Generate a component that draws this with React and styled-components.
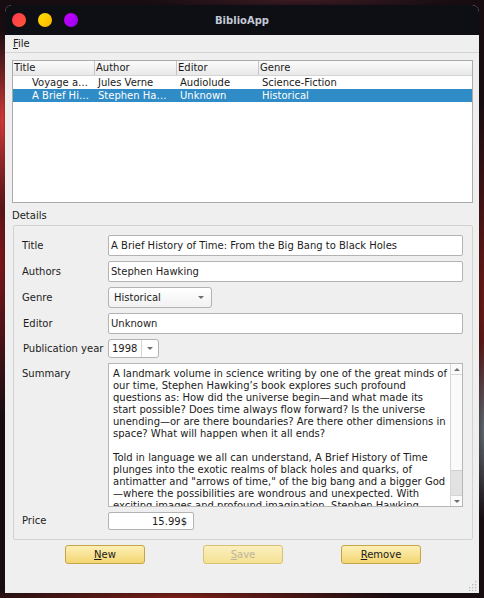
import React from 'react';
import styled, { createGlobalStyle } from 'styled-components';

const Global = createGlobalStyle`
  html, body { margin: 0; padding: 0; }
  body {
    width: 484px;
    height: 598px;
    overflow: hidden;
    background:
      radial-gradient(ellipse 14px 90px at 2px 120px, rgba(230, 60, 60, 0.9), transparent),
      radial-gradient(ellipse 20px 160px at 0px 260px, rgba(150, 25, 30, 0.8), transparent),
      radial-gradient(ellipse 14px 90px at 484px 430px, rgba(110, 140, 150, 0.7), transparent),
      radial-gradient(ellipse 16px 200px at 484px 300px, rgba(140, 30, 25, 0.7), transparent),
      radial-gradient(ellipse 220px 14px at 180px 598px, rgba(150, 35, 25, 0.8), transparent),
      radial-gradient(ellipse 160px 10px at 300px 0px, rgba(70, 30, 40, 0.8), transparent),
      #170d11;
    font-family: "DejaVu Sans", "Liberation Sans", sans-serif;
    font-size: 10px;
    color: #1c1c1c;
  }
`;

const Desktop = styled.div`
  box-sizing: border-box;
  width: 484px;
  height: 598px;
  padding: 5px;
`;

const Window = styled.div`
  position: relative;
  width: 474px;
  height: 588px;
  background: #efefef;
  border-radius: 7px 7px 0 0;
  overflow: hidden;
  display: flex;
  flex-direction: column;
`;

const TitleBar = styled.div`
  flex: none;
  height: 30px;
  background: #0e0f14;
  display: grid;
  grid-template-columns: 1fr auto 1fr;
  align-items: center;
`;

const Lights = styled.div`
  display: flex;
  gap: 12px;
  padding-left: 7px;
`;

const Light = styled.span`
  width: 14px;
  height: 14px;
  border-radius: 50%;
  background: ${p => p.$bg};
`;

const WinTitle = styled.div`
  font-weight: bold;
  font-size: 10px;
  color: #c3cad7;
`;

const MenuBar = styled.div`
  flex: none;
  height: 17px;
  line-height: 17px;
  padding-left: 8px;
  border-bottom: 1px solid #d3d3d3;
`;

const Content = styled.div`
  flex: 1;
  display: flex;
  flex-direction: column;
  padding: 7px 6px 0 7px;
`;

const Table = styled.div`
  box-sizing: border-box;
  height: 143px;
  background: #fff;
  border: 1px solid #ababab;
`;

const cols = '82px 82px 82px 1fr';

const HeaderRow = styled.div`
  display: grid;
  grid-template-columns: ${cols};
  height: 15px;
  background: linear-gradient(#fbfbfb, #e9e9e9);
  border-bottom: 1px solid #d4d4d4;
  box-sizing: border-box;
`;

const HeaderCell = styled.div`
  line-height: 14px;
  padding-left: 1px;
  border-right: ${p => (p.$last ? 'none' : '1px solid #c6c6c6')};
  color: #1a1a1a;
`;

const Row = styled.div`
  display: grid;
  grid-template-columns: ${cols};
  height: 13px;
  line-height: 13px;
  background: ${p => (p.$selected ? '#308cc6' : 'transparent')};
  color: ${p => (p.$selected ? '#ffffff' : '#1a1a1a')};
`;

const Cell = styled.div`
  padding-left: ${p => p.$indent}px;
  white-space: nowrap;
  overflow: hidden;
`;

const SectionLabel = styled.div`
  margin-top: 7px;
  height: 12px;
  line-height: 12px;
  margin-bottom: 3px;
`;

const Group = styled.div`
  margin-left: 1px;
  border: 1px solid #d2d2d2;
  border-radius: 2px;
  padding: 9px 9px 9px 8px;
  display: grid;
  grid-template-columns: 86px 1fr;
  row-gap: 5px;
  align-items: center;
`;

const Label = styled.div`
  line-height: 12px;
  align-self: ${p => (p.$top ? 'start' : 'center')};
  padding-top: ${p => (p.$top ? 5 : 0)}px;
  padding-left: ${p => p.$shift || 0}px;
`;

const TextBox = styled.div`
  box-sizing: border-box;
  height: ${p => p.$h}px;
  width: ${p => (p.$w ? `${p.$w}px` : 'auto')};
  background: #fff;
  border: 1px solid #b3b3b3;
  border-radius: 2px;
  display: flex;
  align-items: center;
  justify-content: ${p => (p.$right ? 'flex-end' : 'flex-start')};
  padding: ${p => (p.$right ? '0 6px 0 0' : '0 0 0 2px')};
  white-space: nowrap;
`;

const Combo = styled.div`
  box-sizing: border-box;
  height: ${p => p.$h}px;
  width: ${p => p.$w}px;
  border: 1px solid #b3b3b3;
  border-radius: 3px;
  background: ${p => (p.$plain ? '#fff' : 'linear-gradient(#ffffff, #f1f1f1)')};
  display: flex;
  align-items: center;
`;

const ComboText = styled.div`
  flex: 1;
  padding-left: ${p => p.$pad}px;
`;

const ComboArrow = styled.div`
  width: ${p => p.$w}px;
  align-self: stretch;
  display: flex;
  align-items: center;
  justify-content: center;
  border-left: ${p => (p.$sep ? '1px solid #d4d4d4' : 'none')};
`;

const Tri = styled.span`
  width: 0;
  height: 0;
  border-left: 3px solid transparent;
  border-right: 3px solid transparent;
  border-${p => (p.$up ? 'bottom' : 'top')}: 3px solid #6e6e6e;
`;

const TextArea = styled.div`
  box-sizing: border-box;
  height: 144px;
  background: #fff;
  border: 1px solid #b6b6b6;
  display: flex;
  overflow: hidden;
`;

const AreaText = styled.div`
  flex: 1;
  padding: 4px 0 0 4px;
  white-space: pre;
  line-height: 12px;
  overflow: hidden;
  color: #1a1a1a;
`;

const ScrollBar = styled.div`
  width: 11px;
  flex: none;
  border-left: 1px solid #d6d6d6;
  background: #fafafa;
  display: flex;
  flex-direction: column;
`;

const ScrollBtn = styled.div`
  height: 10px;
  flex: none;
  display: flex;
  align-items: center;
  justify-content: center;
  border-${p => (p.$up ? 'bottom' : 'top')}: 1px solid #d6d6d6;
`;

const Track = styled.div`
  flex: 1;
  display: flex;
  flex-direction: column;
  justify-content: flex-end;
`;

const Thumb = styled.div`
  height: 24px;
  background: #e2e2e2;
  border-top: 1px solid #d0d0d0;
`;

const ButtonRow = styled.div`
  display: flex;
  gap: 58px;
  padding-left: 53px;
  margin-top: 5px;
`;

const Button = styled.div`
  box-sizing: border-box;
  width: 80px;
  height: 19px;
  border-radius: 3px;
  border: 1px solid ${p => (p.$disabled ? '#d8c274' : '#c6a548')};
  background: ${p =>
    p.$disabled
      ? 'linear-gradient(#fbefbf, #f5e293)'
      : 'linear-gradient(#fdf0b6, #f3d672)'};
  color: ${p => (p.$disabled ? '#bdb49c' : '#1a1a1a')};
  display: flex;
  align-items: center;
  justify-content: center;
`;

const Grip = styled.svg`
  position: absolute;
  right: 2px;
  bottom: 2px;
`;

const summary = [
  'A landmark volume in science writing by one of the great minds of',
  'our time, Stephen Hawking\u2019s book explores such profound',
  'questions as: How did the universe begin\u2014and what made its',
  'start possible? Does time always flow forward? Is the universe',
  'unending\u2014or are there boundaries? Are there other dimensions in',
  'space? What will happen when it all ends?',
  '',
  'Told in language we all can understand, A Brief History of Time',
  'plunges into the exotic realms of black holes and quarks, of',
  'antimatter and "arrows of time," of the big bang and a bigger God',
  '\u2014where the possibilities are wondrous and unexpected. With',
  'exciting images and profound imagination, Stephen Hawking',
].join('\n');

const rows = [
  ['Voyage a\u2026', 'Jules Verne', 'Audiolude', 'Science-Fiction'],
  ['A Brief Hi\u2026', 'Stephen Ha\u2026', 'Unknown', 'Historical'],
];

export default function App() {
  return (
    <>
      <Global />
      <Desktop>
        <Window>
          <TitleBar>
            <Lights>
              <Light $bg="linear-gradient(135deg, #ff3553, #ff5a32)" />
              <Light $bg="linear-gradient(135deg, #ffe000, #ffb400)" />
              <Light $bg="linear-gradient(135deg, #c400ff, #9a00f0)" />
            </Lights>
            <WinTitle>BiblioApp</WinTitle>
            <div />
          </TitleBar>
          <MenuBar>
            <u>F</u>ile
          </MenuBar>
          <Content>
            <Table>
              <HeaderRow>
                <HeaderCell>Title</HeaderCell>
                <HeaderCell>Author</HeaderCell>
                <HeaderCell>Editor</HeaderCell>
                <HeaderCell $last>Genre</HeaderCell>
              </HeaderRow>
              {rows.map((r, i) => (
                <Row key={i} $selected={i === 1}>
                  <Cell $indent={19}>{r[0]}</Cell>
                  <Cell $indent={3}>{r[1]}</Cell>
                  <Cell $indent={3}>{r[2]}</Cell>
                  <Cell $indent={3}>{r[3]}</Cell>
                </Row>
              ))}
            </Table>
            <SectionLabel>Details</SectionLabel>
            <Group>
              <Label>Title</Label>
              <TextBox $h={21}>A Brief History of Time: From the Big Bang to Black Holes</TextBox>
              <Label>Authors</Label>
              <TextBox $h={21}>Stephen Hawking</TextBox>
              <Label>Genre</Label>
              <Combo $h={21} $w={104}>
                <ComboText $pad={5}>Historical</ComboText>
                <ComboArrow $w={20}>
                  <Tri />
                </ComboArrow>
              </Combo>
              <Label $shift={1}>Editor</Label>
              <TextBox $h={21}>Unknown</TextBox>
              <Label $shift={1}>Publication year</Label>
              <Combo $h={19} $w={51} $plain>
                <ComboText $pad={3}>1998</ComboText>
                <ComboArrow $w={16} $sep>
                  <Tri />
                </ComboArrow>
              </Combo>
              <Label $top>Summary</Label>
              <TextArea>
                <AreaText>{summary}</AreaText>
                <ScrollBar>
                  <ScrollBtn $up>
                    <Tri $up />
                  </ScrollBtn>
                  <Track>
                    <Thumb />
                  </Track>
                  <ScrollBtn>
                    <Tri />
                  </ScrollBtn>
                </ScrollBar>
              </TextArea>
              <Label>Price</Label>
              <TextBox $h={18} $w={86} $right>15.99$</TextBox>
            </Group>
            <ButtonRow>
              <Button>
                <span><u>N</u>ew</span>
              </Button>
              <Button $disabled>
                <span><u>S</u>ave</span>
              </Button>
              <Button>
                <span><u>R</u>emove</span>
              </Button>
            </ButtonRow>
          </Content>
          <Grip width="10" height="10" viewBox="0 0 10 10">
            {[[8, 0], [5, 3], [8, 3], [2, 6], [5, 6], [8, 6], [2, 9], [5, 9], [8, 9]].map(([x, y], i) => (
              <rect key={i} x={x} y={y} width="1.3" height="1.3" fill="#b8b8b8" />
            ))}
          </Grip>
        </Window>
      </Desktop>
    </>
  );
}
